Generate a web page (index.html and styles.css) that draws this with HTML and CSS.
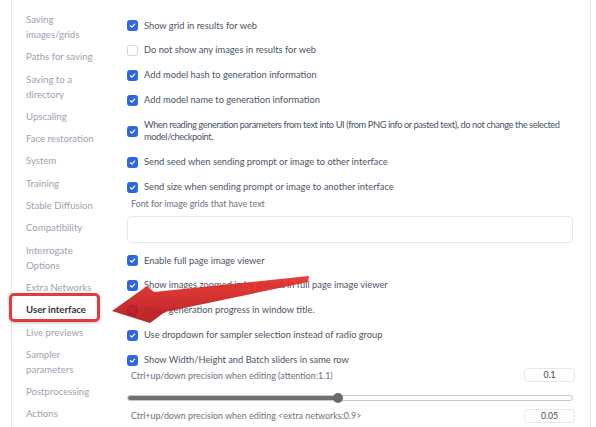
FILE: index.html
```html
<!DOCTYPE html>
<html>
<head>
	<title>Settings - User interface</title>
	<link rel="stylesheet" href="styles.css">
</head>
<body>
	<div class="page">
		<div class="sidebar">
			<div class="nav-item">Saving images/grids</div>
			<div class="nav-item">Paths for saving</div>
			<div class="nav-item">Saving to a directory</div>
			<div class="nav-item">Upscaling</div>
			<div class="nav-item">Face restoration</div>
			<div class="nav-item">System</div>
			<div class="nav-item">Training</div>
			<div class="nav-item">Stable Diffusion</div>
			<div class="nav-item">Compatibility</div>
			<div class="nav-item">Interrogate Options</div>
			<div class="nav-item">Extra Networks</div>
			<div class="nav-item active">User interface</div>
			<div class="nav-item">Live previews</div>
			<div class="nav-item">Sampler parameters</div>
			<div class="nav-item">Postprocessing</div>
			<div class="nav-item">Actions</div>
		</div>

		<div class="content">
			<label class="option"><span class="check on"></span><span>Show grid in results for web</span></label>
			<label class="option"><span class="check"></span><span>Do not show any images in results for web</span></label>
			<label class="option"><span class="check on"></span><span>Add model hash to generation information</span></label>
			<label class="option"><span class="check on"></span><span>Add model name to generation information</span></label>
			<label class="option"><span class="check on"></span><span class="tight">When reading generation parameters from text into UI (from PNG info or pasted text), do not change the selected<br>model/checkpoint.</span></label>
			<label class="option"><span class="check on"></span><span>Send seed when sending prompt or image to other interface</span></label>
			<label class="option"><span class="check on"></span><span>Send size when sending prompt or image to another interface</span></label>

			<div class="field-label">Font for image grids that have text</div>
			<div class="textbox"></div>

			<label class="option"><span class="check on"></span><span>Enable full page image viewer</span></label>
			<label class="option"><span class="check on"></span><span>Show images zoomed in by default in full page image viewer</span></label>
			<label class="option"><span class="check on"></span><span>Show generation progress in window title.</span></label>
			<label class="option"><span class="check on"></span><span>Use dropdown for sampler selection instead of radio group</span></label>
			<label class="option last"><span class="check on"></span><span>Show Width/Height and Batch sliders in same row</span></label>

			<div class="num-row">
				<span class="field-label">Ctrl+up/down precision when editing (attention:1.1)</span>
				<span class="num">0.1</span>
			</div>
			<div class="slider">
				<div class="slider-fill" style="width: 47.3%"></div>
				<div class="slider-thumb" style="left: 47.3%"></div>
			</div>
			<div class="num-row second">
				<span class="field-label">Ctrl+up/down precision when editing &lt;extra networks:0.9&gt;</span>
				<span class="num">0.05</span>
			</div>
		</div>
	</div>

	<svg class="arrow" width="596" height="427" viewBox="0 0 596 427">
		<defs>
			<linearGradient id="red" x1="0" y1="0" x2="0" y2="1">
				<stop offset="0" stop-color="#e8302b"/>
				<stop offset="1" stop-color="#b3151a"/>
			</linearGradient>
		</defs>
		<polygon points="112,311 147,286 154,292 309,276 308,282 165,312 150,323" fill="url(#red)"/>
	</svg>
</body>
</html>
```

FILE: styles.css
```css
body {
	margin: 0;
	background-color: white;
	font-family: Lato, "Open Sans", sans-serif;
	overflow: hidden;
}
.page {
	display: flex;
	margin-left: 11px;
	width: 578px;
	height: 427px;
	border-left: 1px solid #e5e7eb;
	border-right: 1px solid #e5e7eb;
}
.sidebar {
	width: 101px;
	flex-shrink: 0;
	padding: 12px 0 0 14px;
}
.nav-item {
	position: relative;
	max-width: 74px;
	margin-bottom: 7.3px;
	font-size: 9.6px;
	line-height: 15px;
	color: #9ca3af;
}
.nav-item.active {
	color: #333;
	font-weight: bold;
}
.nav-item.active::before {
	content: "";
	position: absolute;
	left: -17px;
	top: -9px;
	width: 85px;
	height: 23px;
	border: 3px solid #e5393d;
	border-radius: 5px;
	box-shadow: 0 1px 3px rgba(0, 0, 0, 0.25);
}
.content {
	flex: 1;
	min-width: 0;
	padding: 19.5px 15px 0 0;
	font-size: 9.3px;
	color: #4b5563;
}
.option {
	display: flex;
	align-items: center;
	gap: 6px;
	margin-bottom: 12.3px;
	line-height: 12.5px;
}
.option .tight {
	letter-spacing: -0.42px;
}
.option.last {
	margin-bottom: 2px;
}
.check {
	flex-shrink: 0;
	width: 9px;
	height: 9px;
	border: 1px solid #d1d5db;
	border-radius: 2.5px;
	background-color: white;
}
.check.on {
	border-color: #2f66e4;
	background-color: #2f66e4;
	background-image: url("data:image/svg+xml,%3Csvg xmlns='http://www.w3.org/2000/svg' viewBox='0 0 10 10'%3E%3Cpath d='M2.6 5.2 L4.3 6.8 L7.4 3.4' fill='none' stroke='white' stroke-width='1.4' stroke-linecap='round' stroke-linejoin='round'/%3E%3C/svg%3E");
}
.field-label {
	display: block;
	padding-left: 4px;
	color: #6b7280;
	font-size: 8.9px;
	line-height: 12.5px;
}
.content > .field-label {
	margin-top: -7.5px;
}
.textbox {
	height: 25px;
	margin: 5px 2px 12px 0;
	border: 1px solid #e5e7eb;
	border-radius: 4px;
}
.num-row {
	display: flex;
	justify-content: space-between;
	align-items: flex-end;
}
.num-row.second {
	margin-top: 7.5px;
}
.num {
	width: 49px;
	height: 12px;
	border: 1px solid #e5e7eb;
	border-radius: 4px;
	text-align: center;
	font-size: 8.6px;
	line-height: 12px;
	color: #444;
}
.slider {
	position: relative;
	height: 4px;
	margin: 13px 2px 0 0;
	border: 1px solid #c9c9c9;
	border-radius: 3px;
	background-color: white;
}
.slider-fill {
	height: 100%;
	background-color: #6f6f6f;
	border-radius: 3px 0 0 3px;
}
.slider-thumb {
	position: absolute;
	top: -3px;
	width: 10px;
	height: 10px;
	margin-left: -5px;
	border-radius: 50%;
	background-color: #6a6a6a;
}
.arrow {
	position: absolute;
	left: 0;
	top: 0;
	pointer-events: none;
	opacity: 0.93;
}
```
